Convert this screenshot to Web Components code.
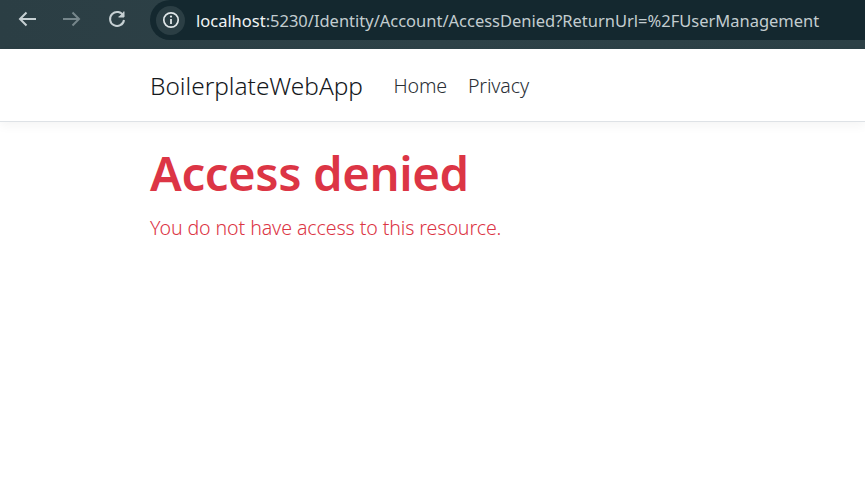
<!DOCTYPE html>
<html>
<head>
<meta charset="utf-8">
<title>Access denied</title>
<style>
  html, body { margin: 0; height: 100%; background: #fff; overflow: hidden; }
  body { display: flex; flex-direction: column; font-family: "Noto Sans", "Open Sans", sans-serif; }
</style>
</head>
<body>
<browser-bar url-host="localhost" url-rest=":5230/Identity/Account/AccessDenied?ReturnUrl=%2FUserManagement"></browser-bar>
<site-nav brand="BoilerplateWebApp">
  <a href="#">Home</a>
  <a href="#">Privacy</a>
</site-nav>
<denied-page heading="Access denied">You do not have access to this resource.</denied-page>

<script>
class BrowserBar extends HTMLElement {
  constructor() {
    super();
    this.attachShadow({ mode: 'open' });
    this.shadowRoot.innerHTML = `
      <style>
        :host { display: flex; height: 49px; flex: none; align-items: flex-start; background: linear-gradient(90deg, #2b3e44, #2e4248 50%, #2c4046); color: #e6ecee; }
        .btns { display: flex; width: 150px; height: 38px; flex: none; align-items: center; gap: 18px; padding: 0 0 0 14px; box-sizing: border-box; }
        .btns svg { width: 27px; height: 22px; flex: none; fill: none; stroke: #c6d0d3; stroke-width: 2; }
        .btns svg.off { stroke: #76868b; }
        .omni { flex: 1; height: 40px; display: flex; align-items: center; gap: 11px; background: #14282f; border-radius: 20px 0 0 20px; padding-left: 6px; }
        .info { width: 29px; height: 29px; border-radius: 50%; background: #2b3e44; display: flex; align-items: center; justify-content: center; flex: none; }
        .url { font: 16.5px "Noto Sans", sans-serif; color: #c3cdd0; white-space: nowrap; letter-spacing: -0.01px; }
        .url b { font-weight: 400; color: #f1f4f5; }
      </style>
      <div class="btns">
        <svg viewBox="0 0 27 22"><path d="M22 11H6M12.5 4.5L6 11l6.5 6.5"/></svg>
        <svg class="off" viewBox="0 0 27 22"><path d="M4 11h16M13.5 4.5L20 11l-6.5 6.5"/></svg>
        <svg viewBox="0 0 27 22"><path d="M19.4 8A7 7 0 1 0 20 12"/><path d="M20 3.5V9h-5.5" fill="#c6d0d3" stroke-width="1"/></svg>
      </div>
      <div class="omni">
        <span class="info"><svg width="18" height="18" viewBox="0 0 18 18" fill="none"><circle cx="9" cy="9" r="7.2" stroke="#e0e6e8" stroke-width="1.7"/><path d="M9 8v5" stroke="#e0e6e8" stroke-width="1.8"/><circle cx="9" cy="5.6" r="1.1" fill="#e0e6e8"/></svg></span>
        <span class="url"><b>${this.getAttribute('url-host')}</b>${this.getAttribute('url-rest')}</span>
      </div>`;
  }
}
customElements.define('browser-bar', BrowserBar);

class SiteNav extends HTMLElement {
  constructor() {
    super();
    this.attachShadow({ mode: 'open' });
    this.shadowRoot.innerHTML = `
      <style>
        :host { display: flex; flex: none; height: 72px; align-items: center; box-sizing: content-box; padding-left: 150px; background: #fff; border-bottom: 1px solid #dee2e6; box-shadow: 0 4px 10px rgba(0,0,0,.045); color: #212529; }
        .brand { font-size: 24.4px; font-weight: 300; color: #14181c; margin-right: 20px; }
        ::slotted(a) { font-size: 19.6px; font-weight: 300; color: #2a2f35; text-decoration: none; padding: 0 10.5px; letter-spacing: -0.15px; }
      </style>
      <span class="brand">${this.getAttribute('brand')}</span>
      <slot></slot>`;
  }
}
customElements.define('site-nav', SiteNav);

class DeniedPage extends HTMLElement {
  constructor() {
    super();
    this.attachShadow({ mode: 'open' });
    this.shadowRoot.innerHTML = `
      <style>
        :host { display: block; padding: 19px 0 0 150px; color: #dc3545; }
        h1 { margin: 0 0 10px; font-size: 47.3px; line-height: 64px; font-weight: 600; letter-spacing: -0.4px; }
        p { margin: 0; font-size: 19.6px; font-weight: 300; line-height: 26px; letter-spacing: -0.1px; }
      </style>
      <h1>${this.getAttribute('heading')}</h1>
      <p><slot></slot></p>`;
  }
}
customElements.define('denied-page', DeniedPage);
</script>
</body>
</html>
